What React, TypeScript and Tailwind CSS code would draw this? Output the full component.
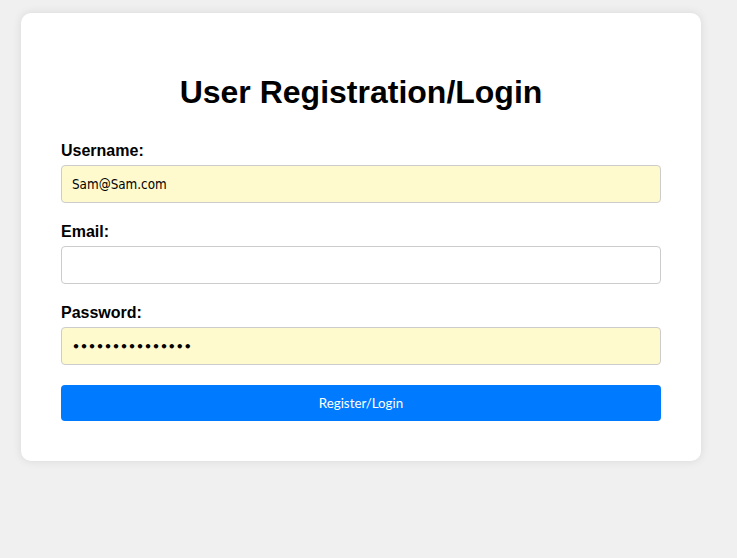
export default function App() {
  return (
    <div className="min-h-[558px] w-full bg-[#f0f0f0] pt-[13px] pl-[21px]" style={{ fontFamily: '"Liberation Sans", Arial, sans-serif' }}>
      <div className="w-[680px] rounded-[10px] bg-white px-10 pt-10 pb-10 shadow-[0_0_10px_rgba(0,0,0,0.1)]">
        <h1 className="mt-[21px] mb-[22px] text-center text-[32px] leading-[37px] font-bold text-black">User Registration/Login</h1>
        <form className="flex flex-col pt-[9px]">
          <label className="mb-[5px] block text-[16px] leading-[18px] font-bold text-black">Username:</label>
          <input
            type="text"
            defaultValue="Sam@Sam.com"
            className="mb-5 h-[38px] w-full rounded-[4px] border border-[#ccc] bg-[#fffacd] px-[10px] text-[13.33px] text-black outline-none"
            style={{ fontFamily: '"DejaVu Sans Condensed", "DejaVu Sans", sans-serif' }}
          />
          <label className="mb-[5px] block text-[16px] leading-[18px] font-bold text-black">Email:</label>
          <input
            type="email"
            className="mb-5 h-[38px] w-full rounded-[4px] border border-[#ccc] bg-white px-[10px] text-[13px] outline-none"
          />
          <label className="mb-[5px] block text-[16px] leading-[18px] font-bold text-black">Password:</label>
          <input
            type="password"
            defaultValue="aaaaaaaaaaaaaaa"
            className="mb-5 h-[38px] w-full rounded-[4px] border border-[#ccc] bg-[#fffacd] px-[10px] text-[12.5px] font-bold text-black outline-none"
            style={{ fontFamily: '"DejaVu Sans", sans-serif' }}
          />
          <button
            type="button"
            className="h-9 w-full rounded-[4px] bg-[#007bff] pt-[1px] text-[13.33px] text-white"
            style={{ fontFamily: 'Lato, sans-serif' }}
          >
            Register/Login
          </button>
        </form>
      </div>
    </div>
  );
}
